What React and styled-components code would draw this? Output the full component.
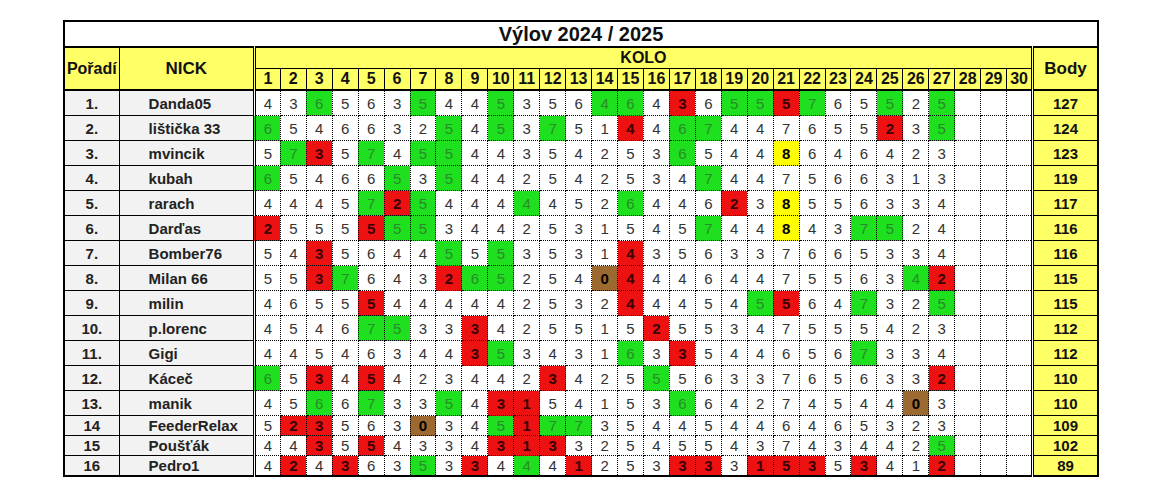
import React from 'react';
import styled, { createGlobalStyle } from 'styled-components';

const GlobalStyle = createGlobalStyle`
    body {
        margin: 0;
        background: white;
        font-family: "Liberation Sans", Arial, sans-serif;
    }
`;

const Page = styled.div`
    padding: 20px 0 0 63px;
`;

const Table = styled.table`
    border-collapse: collapse;
    table-layout: fixed;
    width: 1036px;
    border: 2px solid #000;
    font-family: "Liberation Sans", Arial, sans-serif;
`;

const Title = styled.th`
    height: 24px;
    padding: 0;
    font-size: 20px;
    font-weight: bold;
    color: #111;
    border-bottom: 2px solid #000;
    background: white;
`;

const HeadCell = styled.th`
    background: #ffff66;
    border: 1px solid #000;
    border-bottom: 2px solid #000;
    font-size: ${p => p.$small ? '16px' : '17px'};
    font-weight: bold;
    color: #111;
    padding: 0;
    white-space: nowrap;
    ${p => p.$double && 'border-left: 3px double #000;'}
`;

const KoloCell = styled.th`
    background: #ffff66;
    border: 1px solid #000;
    border-left: 3px double #000;
    height: 20px;
    padding: 0;
    font-size: 16px;
    font-weight: bold;
    color: #111;
`;

const RoundCell = styled.th`
    background: #ffff66;
    border: 1px solid #000;
    border-bottom: 2px solid #000;
    height: 20px;
    padding: 0;
    font-size: 16px;
    font-weight: bold;
    color: #111;
    ${p => p.$first && 'border-left: 3px double #000;'}
`;

const RankCell = styled.td`
    background: #f2f2f2;
    border: 1px solid #000;
    text-align: center;
    font-size: 15px;
    font-weight: bold;
    color: #222;
    padding: 0;
    height: ${p => p.$h}px;
`;

const NickCell = styled.td`
    background: #f2f2f2;
    border: 1px solid #000;
    font-size: 15px;
    font-weight: bold;
    color: #222;
    padding: 0 0 0 29px;
    white-space: nowrap;
    overflow: hidden;
`;

const tones = {
    g: { bg: '#1ee01e', fg: '#2b8a2b', w: 'normal' },
    r: { bg: '#ee1111', fg: '#3a0000', w: 'bold' },
    y: { bg: '#ffff00', fg: '#000', w: 'bold' },
    b: { bg: '#9c6a30', fg: '#000', w: 'bold' },
    n: { bg: 'white', fg: '#333', w: 'normal' },
};

const ScoreCell = styled.td`
    background: ${p => tones[p.$tone].bg};
    color: ${p => tones[p.$tone].fg};
    font-weight: ${p => tones[p.$tone].w};
    border: 1px dotted #000;
    text-align: center;
    font-size: 15px;
    padding: 0;
    ${p => p.$first && 'border-left: 3px double #000;'}
`;

const BodyCell = styled.td`
    background: #ffff66;
    border: 1px solid #000;
    border-left: 3px double #000;
    text-align: center;
    font-size: 15px;
    font-weight: bold;
    color: #111;
    padding: 0;
`;

const data = [
    ['1.', 'Danda05', '4 3 6g 5 6 3 5g 4 4 5g 3 5 6 4g 6g 4 3r 6 5g 5g 5r 7g 6 5 5g 2 5g', 127],
    ['2.', 'lištička 33', '6g 5 4 6 6 3 2 5g 4 5g 3 7g 5 1 4r 4 6g 7g 4 4 7 6 5 5 2r 3 5g', 124],
    ['3.', 'mvincik', '5 7g 3r 5 7g 4 5g 5g 4 4 3 5 4 2 5 3 6g 5 4 4 8y 6 4 6 4 2 3', 123],
    ['4.', 'kubah', '6g 5 4 6 6 5g 3 5g 4 4 2 5 4 2 5 3 4 7g 4 4 7 5 6 6 3 1 3', 119],
    ['5.', 'rarach', '4 4 4 5 7g 2r 5g 4 4 4 4g 4 5 2 6g 4 4 6 2r 3 8y 5 5 6 3 3 4', 117],
    ['6.', 'Darďas', '2r 5 5 5 5r 5g 5g 3 4 4 2 5 3 1 5 4 5 7g 4 4 8y 4 3 7g 5g 2 4', 116],
    ['7.', 'Bomber76', '5 4 3r 5 6 4 4 5g 5 5g 3 5 3 1 4r 3 5 6 3 3 7 6 6 5 3 3 4', 116],
    ['8.', 'Milan 66', '5 5 3r 7g 6 4 3 2r 6g 5g 2 5 4 0b 4r 4 4 6 4 4 7 5 5 6 3 4g 2r', 115],
    ['9.', 'milin', '4 6 5 5 5r 4 4 4 4 4 2 5 3 2 4r 4 4 5 4 5g 5r 6 4 7g 3 2 5g', 115],
    ['10.', 'p.lorenc', '4 5 4 6 7g 5g 3 3 3r 4 2 5 5 1 5 2r 5 5 3 4 7 5 5 5 4 2 3', 112],
    ['11.', 'Gigi', '4 4 5 4 6 3 4 4 3r 5g 3 4 3 1 6g 3 3r 5 4 4 6 5 6 7g 3 3 4', 112],
    ['12.', 'Káceč', '6g 5 3r 4 5r 4 2 3 4 4 2 3r 4 2 5 5g 5 6 3 3 7 6 5 6 3 3 2r', 110],
    ['13.', 'manik', '4 5 6g 6 7g 3 3 5g 4 3r 1r 5 4 1 5 3 6g 6 4 2 7 4 5 4 4 0b 3', 110],
    ['14', 'FeederRelax', '5 2r 3r 5 6 3 0b 3 4 5g 1r 7g 7g 3 5 4 4 5 4 4 6 4 6 5 3 2 3', 109],
    ['15', 'Poušťák', '4 4 3r 5 5r 4 3 3 4 3r 1r 3r 3 2 5 4 5 5 4 3 7 4 3 4 4 2 5g', 102],
    ['16', 'Pedro1', '4 2r 4 3r 6 3 5g 3 3r 4 4g 4 1r 2 5 3 3r 3r 3 1r 5r 3r 5 3r 4 1 2r', 89],
];

const rounds = Array.from({ length: 30 }, (_, i) => i + 1);

function parseScores(text) {
    const cells = text.split(' ').map(t => ({ v: t[0], tone: t[1] || 'n' }));
    while (cells.length < 30) cells.push({ v: '', tone: 'n' });
    return cells;
}

export default function App() {
    return (
        <Page>
            <GlobalStyle />
            <Table>
                <colgroup>
                    <col style={{ width: 55 }} />
                    <col style={{ width: 135 }} />
                    {rounds.map(r => <col key={r} style={{ width: 25.9 }} />)}
                    <col style={{ width: 65 }} />
                </colgroup>
                <thead>
                    <tr>
                        <Title colSpan={33}>Výlov 2024 / 2025</Title>
                    </tr>
                    <tr>
                        <HeadCell rowSpan={2} $small>Pořadí</HeadCell>
                        <HeadCell rowSpan={2}>NICK</HeadCell>
                        <KoloCell colSpan={30}>KOLO</KoloCell>
                        <HeadCell rowSpan={2} $double>Body</HeadCell>
                    </tr>
                    <tr>
                        {rounds.map(r => (
                            <RoundCell key={r} $first={r === 1}>{r}</RoundCell>
                        ))}
                    </tr>
                </thead>
                <tbody>
                    {data.map(([rank, nick, scores, body], i) => (
                        <tr key={nick}>
                            <RankCell $h={i < 13 ? 24 : 19}>{rank}</RankCell>
                            <NickCell>{nick}</NickCell>
                            {parseScores(scores).map((c, j) => (
                                <ScoreCell key={j} $tone={c.tone} $first={j === 0}>{c.v}</ScoreCell>
                            ))}
                            <BodyCell>{body}</BodyCell>
                        </tr>
                    ))}
                </tbody>
            </Table>
        </Page>
    );
}
